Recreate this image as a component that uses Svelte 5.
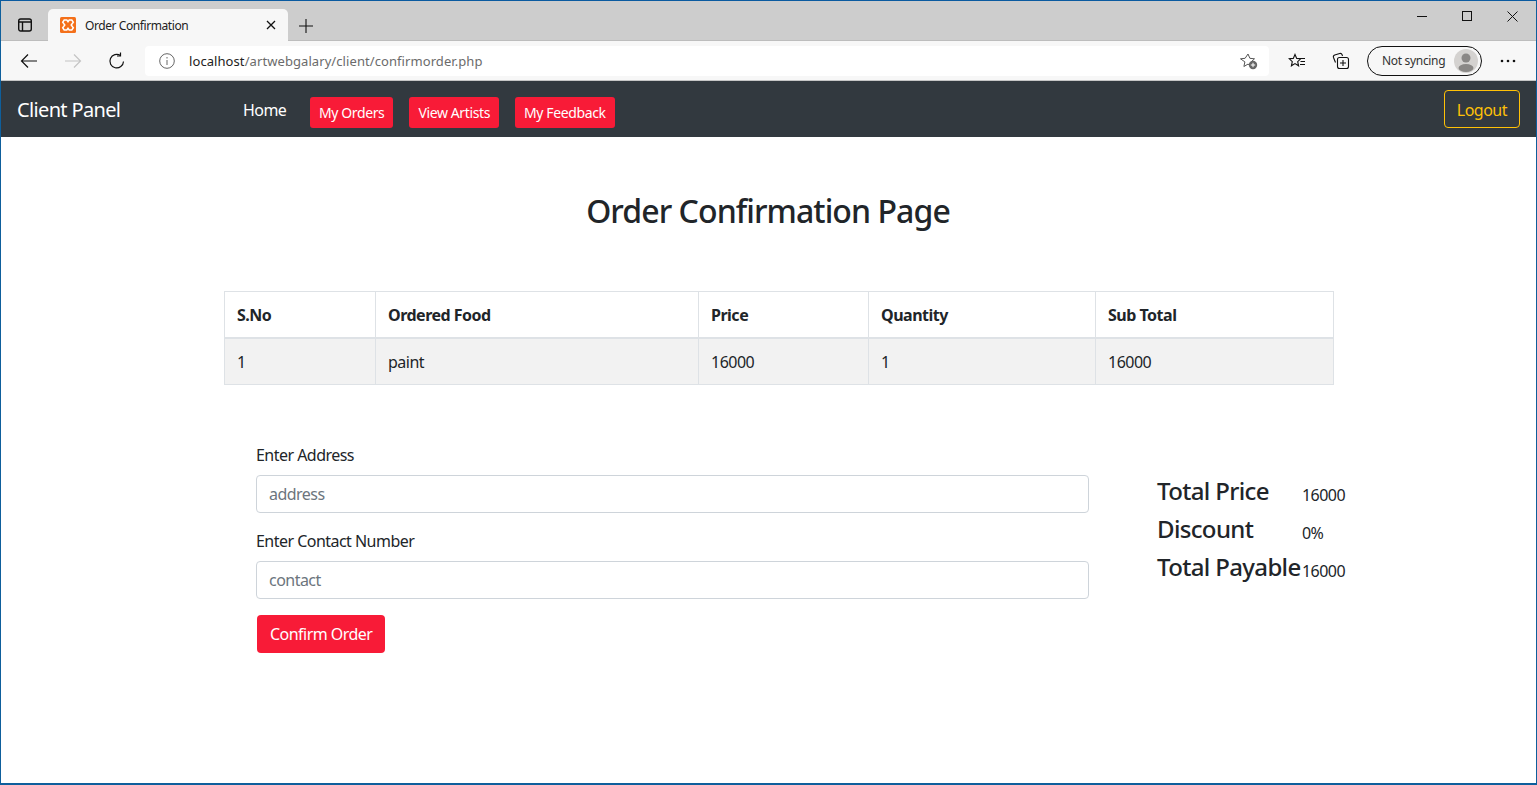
<script>
  const cols = ['S.No', 'Ordered Food', 'Price', 'Quantity', 'Sub Total'];
  const row = ['1', 'paint', '16000', '1', '16000'];
  const links = ['My Orders', 'View Artists', 'My Feedback'];
  const totals = [['Total Price', '16000'], ['Discount', '0%'], ['Total Payable', '16000']];
</script>

<div class="window">
  <div class="tabstrip">
    <div class="tabaction">
      <svg width="16" height="16" viewBox="0 0 16 16" fill="none" stroke="#111" stroke-width="1.4"><rect x="1.700" y="2" width="12.600" height="12" rx="2"/><path d="M1.700 5h12.600M5.500 5v9"/></svg>
    </div>
    <div class="tab">
      <svg class="fav" width="16" height="16" viewBox="0 0 16 16"><rect width="16" height="16" rx="1.500" fill="#f4701a"/><path d="M4.200 3h2.600l1.200 1.700L9.200 3h2.600l1.500 2.300L11.200 8l2.100 2.700-1.500 2.300H9.200L8 11.300 6.800 13H4.200l-1.500-2.300L4.800 8 2.700 5.300z" fill="none" stroke="#fff" stroke-width="1.500"/></svg>
      <span class="tabtitle">Order Confirmation</span>
      <svg class="tabclose" width="10" height="10" viewBox="0 0 10 10" stroke="#111" stroke-width="1.300"><path d="M1 1l8 8M9 1l-8 8"/></svg>
    </div>
    <svg class="newtab" width="14" height="14" viewBox="0 0 14 14" stroke="#111" stroke-width="1.100"><path d="M7 0v14M0 7h14"/></svg>
    <div class="winbtns">
      <svg width="11" height="11" viewBox="0 0 11 11" stroke="#111"><path d="M0 5.500h10"/></svg>
      <svg width="11" height="11" viewBox="0 0 11 11" stroke="#111" fill="none"><rect x=".5" y=".5" width="9" height="9"/></svg>
      <svg width="11" height="11" viewBox="0 0 11 11" stroke="#111"><path d="M.5.5l10 10M10.500.5l-10 10"/></svg>
    </div>
  </div>

  <div class="toolbar">
    <svg class="tool" width="18" height="16" viewBox="0 0 18 16" fill="none" stroke="#111" stroke-width="1.200"><path d="M17 8H1.500M8 1.500L1.500 8 8 14.500"/></svg>
    <svg class="tool fwd" width="18" height="16" viewBox="0 0 18 16" fill="none" stroke="#c4c4c4" stroke-width="1.200"><path d="M1 8h15.500M10 1.500L16.500 8 10 14.500"/></svg>
    <svg class="tool reload" width="18" height="18" viewBox="0 0 18 18" fill="none" stroke="#111" stroke-width="1.200"><path d="M15.500 9.500A6.800 6.800 0 1 1 12.500 3.500"/><path d="M12.500.5v3.500H9"/></svg>
    <div class="omnibox">
      <svg width="16" height="16" viewBox="0 0 16 16" fill="none" stroke="#666" stroke-width="1"><circle cx="8" cy="8" r="7.300"/><path d="M8 7v5M8 4v1.500"/></svg>
      <span class="url"><b>localhost</b>/artwebgalary/client/confirmorder.php</span>
      <svg class="addfav" width="18" height="18" viewBox="0 0 18 18"><path d="M8 2l1.900 4.300 4.600.5-3.400 3.100 1 4.600-4.100-2.400-4.100 2.400 1-4.600L.5 6.800l4.600-.5z" fill="none" stroke="#555"/><circle cx="13" cy="13" r="4.200" fill="#666"/><path d="M13 10.800v4.400M10.800 13h4.400" stroke="#fff"/></svg>
    </div>
    <svg class="favs" width="18" height="16" viewBox="0 0 18 16" fill="none" stroke="#111" stroke-width="1.100"><path d="M7 1.500l1.700 3.900 4 .4-3 2.800.9 4.200L7 10.600l-3.600 2.200.9-4.200-3-2.800 4-.4zM12 5.500h5M12.500 8.500h4.500M12 11.500h5"/></svg>
    <svg class="colls" width="18" height="18" viewBox="0 0 18 18" fill="none" stroke="#111" stroke-width="1.100"><path d="M3.500 10.500L1.500 5.500a2 2 0 0 1 1.200-2.500l5-1.500a2 2 0 0 1 2.400 1.200l.4 1.300"/><rect x="5.500" y="5.500" width="11" height="11" rx="2"/><path d="M11 8v6M8 11h6"/></svg>
    <div class="sync">
      <span>Not syncing</span>
      <svg width="24" height="24" viewBox="0 0 24 24"><circle cx="12" cy="12" r="12" fill="#d4d2d0"/><circle cx="12" cy="9" r="4.500" fill="#8a8886"/><ellipse cx="12" cy="19" rx="7.500" ry="4" fill="#8a8886"/></svg>
    </div>
    <svg class="more" width="16" height="4" viewBox="0 0 16 4" fill="#111"><circle cx="2" cy="2" r="1.300"/><circle cx="8" cy="2" r="1.300"/><circle cx="14" cy="2" r="1.300"/></svg>
  </div>

  <nav class="navbar">
    <span class="brand">Client Panel</span>
    <span class="home">Home</span>
    <div class="links">
      {#each links as l}
        <span class="navbtn">{l}</span>
      {/each}
    </div>
    <span class="logout">Logout</span>
  </nav>

  <main>
    <h2>Order Confirmation Page</h2>
    <table>
      <colgroup><col class="c1"/><col class="c2"/><col class="c3"/><col class="c4"/><col class="c5"/></colgroup>
      <thead><tr>{#each cols as c}<th>{c}</th>{/each}</tr></thead>
      <tbody><tr>{#each row as c}<td>{c}</td>{/each}</tr></tbody>
    </table>
    <div class="lower">
      <form>
        <label for="addr">Enter Address</label>
        <input id="addr" placeholder="address" />
        <label for="cont">Enter Contact Number</label>
        <input id="cont" placeholder="contact" />
        <button type="button">Confirm Order</button>
      </form>
      <div class="totals">
        {#each totals as t}
          <div class="trow"><h4>{t[0]}</h4><span>{t[1]}</span></div>
        {/each}
      </div>
    </div>
  </main>
</div>

<style>
  :global(body) { margin: 0; background: #fff; }
  .window {
    --font: "Noto Sans", "Open Sans", sans-serif;
    width: 1537px; height: 785px; box-sizing: border-box; overflow: hidden;
    border: 1px solid #0e5f9c; border-bottom-width: 2px; border-top-color: #0a5aa0;
    font-family: var(--font); color: #212529; background: #fff;
  }
  .tabstrip { height: 40px; background: #cdcdcd; display: flex; align-items: flex-end; box-sizing: border-box; border-bottom: 1px solid #bdbdbd; }
  .tabaction { width: 47px; height: 31px; display: flex; align-items: center; justify-content: center; box-sizing: border-box; padding-left: 1px; }
  .tab { width: 240px; height: 32px; background: #f7f7f7; border-radius: 5px 5px 0 0; display: flex; align-items: center; box-sizing: border-box; padding: 0 12px 0 12px; margin-bottom: -1px; }
  .tabtitle { font-size: 12px; letter-spacing: -.42px; margin-left: 9px; color: #222; flex: 1; }
  .newtab { margin: 0 0 7px 11px; }
  .winbtns { margin-left: auto; align-self: stretch; display: flex; gap: 34px; padding: 10px 18px 0 0; align-items: flex-start; }
  .toolbar { height: 40px; background: #f7f7f7; display: flex; align-items: center; box-sizing: border-box; border-bottom: 1px solid #c6c6c6; }
  .tool { margin-left: 19px; }
  .tool.fwd { margin-left: 26px; }
  .tool.reload { margin-left: 26px; }
  .omnibox { width: 1124px; height: 30px; margin-left: 19px; background: #fff; border-radius: 4px; display: flex; align-items: center; box-sizing: border-box; padding: 0 11px 0 14px; }
  .url { font-size: 13px; letter-spacing: .08px; color: #6b6b6b; margin-left: 14px; flex: 1; }
  .url b { font-weight: 400; color: #222; }
  .favs { margin-left: 19px; }
  .colls { margin-left: 26px; }
  .sync { width: 115px; height: 30px; margin-left: 17px; border: 1px solid #111; border-radius: 15px; display: flex; align-items: center; justify-content: space-between; box-sizing: border-box; padding: 0 3px 0 14px; font-size: 12px; letter-spacing: -.32px; color: #333; background: #f7f7f7; }
  .more { margin-left: 18px; }
  .navbar { height: 56px; background: #32393f; display: flex; align-items: center; box-sizing: border-box; padding: 0 16px; }
  .brand { font-size: 20px; letter-spacing: -.65px; color: #fff; width: 226px; }
  .home { font-size: 16px; letter-spacing: -.55px; color: #fff; margin-top: 2px; }
  .links { display: flex; gap: 16px; margin-left: 23.6px; margin-top: 7px; }
  .navbtn { height: 31px; display: flex; align-items: center; padding: 0 9px; background: #f81b37; color: #fff; border-radius: 3px; font-size: 14px; letter-spacing: -.38px; }
  .logout { margin-left: auto; margin-top: -1px; height: 38px; display: flex; align-items: center; box-sizing: border-box; padding: 2px 12px 0; border: 1px solid #ffc107; border-radius: 4px; color: #ffc107; font-size: 16px; letter-spacing: -.5px; }
  main { padding-top: 52px; }
  h2 { margin: 0 0 58px; height: 44px; line-height: 43px; text-align: center; font-size: 32px; font-weight: 500; letter-spacing: -.93px; padding-right: 1px; }
  table { margin-left: 223px; width: 1109px; border-collapse: collapse; table-layout: fixed; font-size: 16px; letter-spacing: -.5px; }
  .c1 { width: 151px; } .c2 { width: 323px; } .c3 { width: 170px; } .c4 { width: 227px; } .c5 { width: 238px; }
  th, td { border: 1px solid #dee2e6; text-align: left; padding: 2px 12px 0; box-sizing: border-box; font-weight: 400; }
  th { font-weight: 700; border-bottom-width: 2px; height: 46px; }
  td { background: #f2f2f2; height: 47px; }
  .lower { display: flex; margin-top: 58px; }
  form { width: 833px; margin-left: 255px; display: flex; flex-direction: column; align-items: flex-start; font-size: 16px; letter-spacing: -.53px; }
  label { height: 24px; line-height: 24px; margin-bottom: 8px; }
  input { width: 100%; height: 38px; box-sizing: border-box; border: 1px solid #ced4da; border-radius: 4px; padding: 0 12px; margin-bottom: 16px; font: inherit; letter-spacing: inherit; color: #495057; outline: none; }
  input::placeholder { color: #6c757d; opacity: 1; }
  button { margin-left: 1px; height: 38px; padding: 0 13px; border: 0; border-radius: 4px; background: #f81b37; color: #fff; font: inherit; letter-spacing: inherit; }
  .totals { margin-left: 68px; padding-top: 33px; }
  .trow { display: flex; height: 38px; }
  h4 { margin: 0; width: 145px; font-size: 24px; line-height: 30px; font-weight: 500; letter-spacing: -.65px; white-space: nowrap; }
  .trow span { font-size: 16px; line-height: 24px; padding-top: 7px; letter-spacing: -.55px; }
</style>
